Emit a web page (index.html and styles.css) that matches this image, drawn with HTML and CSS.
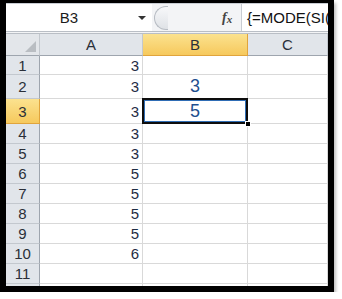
FILE: index.html
```html
<!DOCTYPE html>
<html lang="en">
<head>
    <meta charset="UTF-8">
    <title>MODE formula</title>
    <link rel="stylesheet" href="styles.css">
</head>
<body>
    <div class="frame">
        <div class="formula-bar">
            <div class="name-box">
                <span class="name-text">B3</span>
                <span class="name-arrow"></span>
            </div>
            <div class="splitter"><span class="knob"></span></div>
            <div class="fx">f<span>x</span></div>
            <div class="formula-input">{=MODE(SI(</div>
        </div>

        <div class="sheet">
            <div class="corner"><span class="corner-tri"></span></div>
            <div class="col-head">A</div>
            <div class="col-head active">B</div>
            <div class="col-head">C</div>

            <div class="row-head">1</div><div class="cell num">3</div><div class="cell"></div><div class="cell"></div>
            <div class="row-head">2</div><div class="cell num">3</div><div class="cell big">3</div><div class="cell"></div>
            <div class="row-head active">3</div><div class="cell num">3</div><div class="cell big selected">5<span class="handle"></span></div><div class="cell"></div>
            <div class="row-head">4</div><div class="cell num">3</div><div class="cell"></div><div class="cell"></div>
            <div class="row-head">5</div><div class="cell num">3</div><div class="cell"></div><div class="cell"></div>
            <div class="row-head">6</div><div class="cell num">5</div><div class="cell"></div><div class="cell"></div>
            <div class="row-head">7</div><div class="cell num">5</div><div class="cell"></div><div class="cell"></div>
            <div class="row-head">8</div><div class="cell num">5</div><div class="cell"></div><div class="cell"></div>
            <div class="row-head">9</div><div class="cell num">5</div><div class="cell"></div><div class="cell"></div>
            <div class="row-head">10</div><div class="cell num">6</div><div class="cell"></div><div class="cell"></div>
            <div class="row-head">11</div><div class="cell"></div><div class="cell"></div><div class="cell"></div>
            <div class="row-head"></div><div class="cell"></div><div class="cell"></div><div class="cell"></div>
        </div>
    </div>
</body>
</html>
```

FILE: styles.css
```css
* {
    box-sizing: border-box;
    margin: 0;
    padding: 0;
}

body {
    background: #fff;
    font-family: "Liberation Sans", Arial, sans-serif;
}

.frame {
    width: 334px;
    height: 292px;
    border-style: solid;
    border-color: #000;
    border-width: 3px 6px 6px 6px;
    background: #fff;
    box-shadow: 2px 3px 3px rgba(0, 0, 0, 0.25);
    overflow: hidden;
    display: flex;
    flex-direction: column;
}

/* formula bar */
.formula-bar {
    display: flex;
    height: 31px;
    background: #f3f4f6;
    border-top: 1px solid #c8ccd2;
    border-bottom: 3px double #b9bec5;
    flex-shrink: 0;
}

.name-box {
    width: 146px;
    background: #fff;
    display: flex;
    align-items: center;
    position: relative;
}

.name-text {
    flex: 1;
    text-align: center;
    font-size: 15px;
    color: #1b1b1b;
    padding-right: 6px;
}

.name-arrow {
    width: 0;
    height: 0;
    border-left: 4px solid transparent;
    border-right: 4px solid transparent;
    border-top: 4px solid #333;
    margin-right: 6px;
}

.splitter {
    width: 70px;
    display: flex;
    align-items: center;
    padding-left: 2px;
}

.knob {
    width: 14px;
    height: 24px;
    border-radius: 12px 0 0 12px;
    border: 1px solid #b7bcc3;
    border-right: none;
    background: linear-gradient(#f7f8fa, #dfe2e6);
}

.fx {
    width: 16px;
    font-family: "Liberation Serif", serif;
    font-style: italic;
    font-weight: bold;
    font-size: 14px;
    color: #444;
    display: flex;
    align-items: center;
    margin-right: 3px;
}

.fx span {
    font-size: 11px;
    margin-top: 3px;
}

.formula-input {
    flex: 1;
    background: #fff;
    border-left: 1px solid #c8ccd2;
    font-size: 15px;
    color: #111;
    padding-left: 5px;
    display: flex;
    align-items: center;
    white-space: nowrap;
    overflow: hidden;
}

/* grid */
.sheet {
    flex: 1;
    display: grid;
    grid-template-columns: 34px 103px 105px 1fr;
    grid-template-rows: 22px 19px 24px 25px repeat(9, 20px);
    overflow: hidden;
    font-size: 15px;
}

.corner {
    background: #e3e6ea;
    border-right: 1px solid #c3c8ce;
    border-bottom: 1px solid #9ea5ae;
    position: relative;
}

.corner-tri {
    position: absolute;
    right: 3px;
    bottom: 3px;
    width: 0;
    height: 0;
    border-left: 11px solid transparent;
    border-bottom: 11px solid #b9bdc2;
}

.col-head {
    background: #e1e5ea;
    border-right: 1px solid #c3c8ce;
    border-bottom: 1px solid #9ea5ae;
    display: flex;
    align-items: center;
    justify-content: center;
    color: #2a2f38;
}

.row-head {
    background: #e1e5ea;
    border-right: 1px solid #9ea5ae;
    border-bottom: 1px solid #c3c8ce;
    display: flex;
    align-items: center;
    justify-content: center;
    color: #2a2f38;
}

.col-head.active,
.row-head.active {
    background: linear-gradient(#fbe28f, #f6c95d);
    border-color: #e0a43c;
}

.cell {
    border-right: 1px solid #d9d9d9;
    border-bottom: 1px solid #d9d9d9;
    display: flex;
    align-items: center;
    color: #1f2c44;
}

.num {
    justify-content: flex-end;
    padding-right: 3px;
}

.big {
    justify-content: center;
    font-size: 18px;
    color: #1f4f8f;
}

.selected {
    position: relative;
}

.selected::after {
    content: "";
    position: absolute;
    left: -1px;
    top: -1px;
    right: -1px;
    bottom: -1px;
    border: 2px solid #0d0d0d;
    box-shadow: inset 0 0 0 1px #2f6db5;
}

.handle {
    position: absolute;
    right: -4px;
    bottom: -4px;
    width: 6px;
    height: 6px;
    background: #000;
    border: 1px solid #fff;
    z-index: 1;
}
```
